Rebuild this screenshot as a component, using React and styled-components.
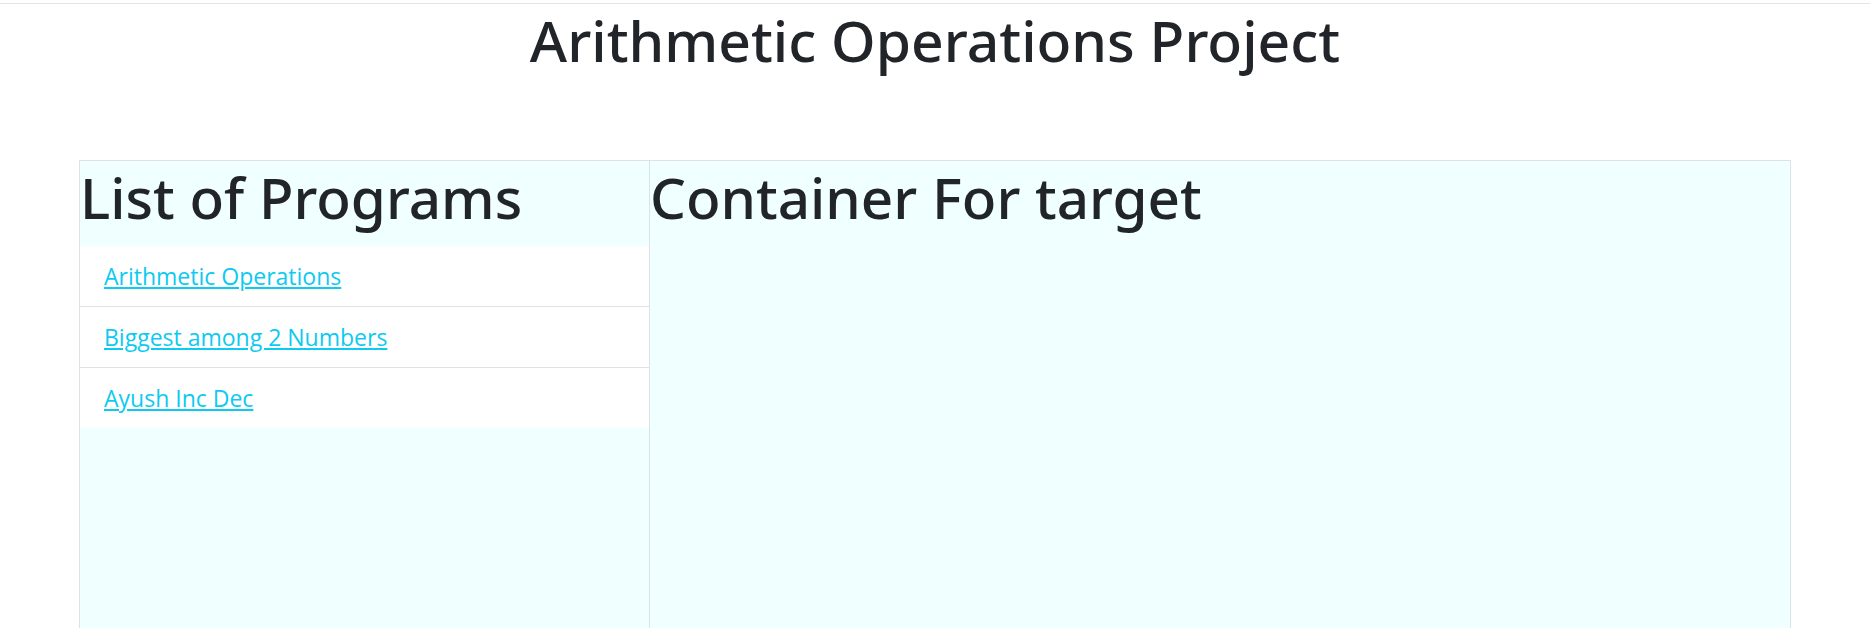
import React from "react";
import styled, { createGlobalStyle } from "styled-components";

const GlobalStyle = createGlobalStyle`
  body {
    margin: 0;
    background: #fff;
    font-family: "Open Sans", "Noto Sans", sans-serif;
    color: #212529;
  }
`

const TopRule = styled.div`
  margin-top: 3px;
  border-top: 1px solid #e3e3e3;
`
const PageTitle = styled.h1`
  margin: 0;
  text-align: center;
  font-family: "Noto Sans", "Open Sans", sans-serif;
  font-size: 57px;
  font-weight: 500;
  line-height: 72px;
`
const Board = styled.div`
  width: 1710px;
  margin: 84px auto 0;
  display: grid;
  grid-template-columns: 569px 1fr;
  height: 520px;
  border: 1px solid #dee2e6;
  border-bottom: none;
  background: #f0ffff;
`
const Column = styled.div`
  border-left: ${(p) => (p.divided ? "1px solid #dee2e6" : "none")};
  display: flex;
  flex-direction: column;
`
const Heading = styled.h2`
  margin: 0 0 13px;
  font-family: "Noto Sans", "Open Sans", sans-serif;
  font-size: 56.6px;
  font-weight: 500;
  line-height: 72px;
`
const ProgramList = styled.ul`
  list-style: none;
  margin: 0;
  padding: 0;
`
const ProgramItem = styled.li`
  background: #fff;
  padding: 12px 24px;
  line-height: 36px;
  font-size: 23px;
  border-bottom: ${(p) => (p.last ? "none" : "1px solid #dee2e6")};
`
const ProgramLink = styled.a`
  color: #0dcaf0;
  text-decoration: underline;
  cursor: pointer;
`

const programs = ["Arithmetic Operations", "Biggest among 2 Numbers", "Ayush Inc Dec"];

const App = () => {
  return (
    <>
      <GlobalStyle />
      <TopRule />
      <PageTitle>Arithmetic Operations Project</PageTitle>
      <Board>
        <Column>
          <Heading>List of Programs</Heading>
          <ProgramList>
            {programs.map((name, i) => (
              <ProgramItem key={name} last={i === programs.length - 1}>
                <ProgramLink href="#">{name}</ProgramLink>
              </ProgramItem>
            ))}
          </ProgramList>
        </Column>
        <Column divided>
          <Heading>Container For target</Heading>
        </Column>
      </Board>
    </>
  )
}
export default App
